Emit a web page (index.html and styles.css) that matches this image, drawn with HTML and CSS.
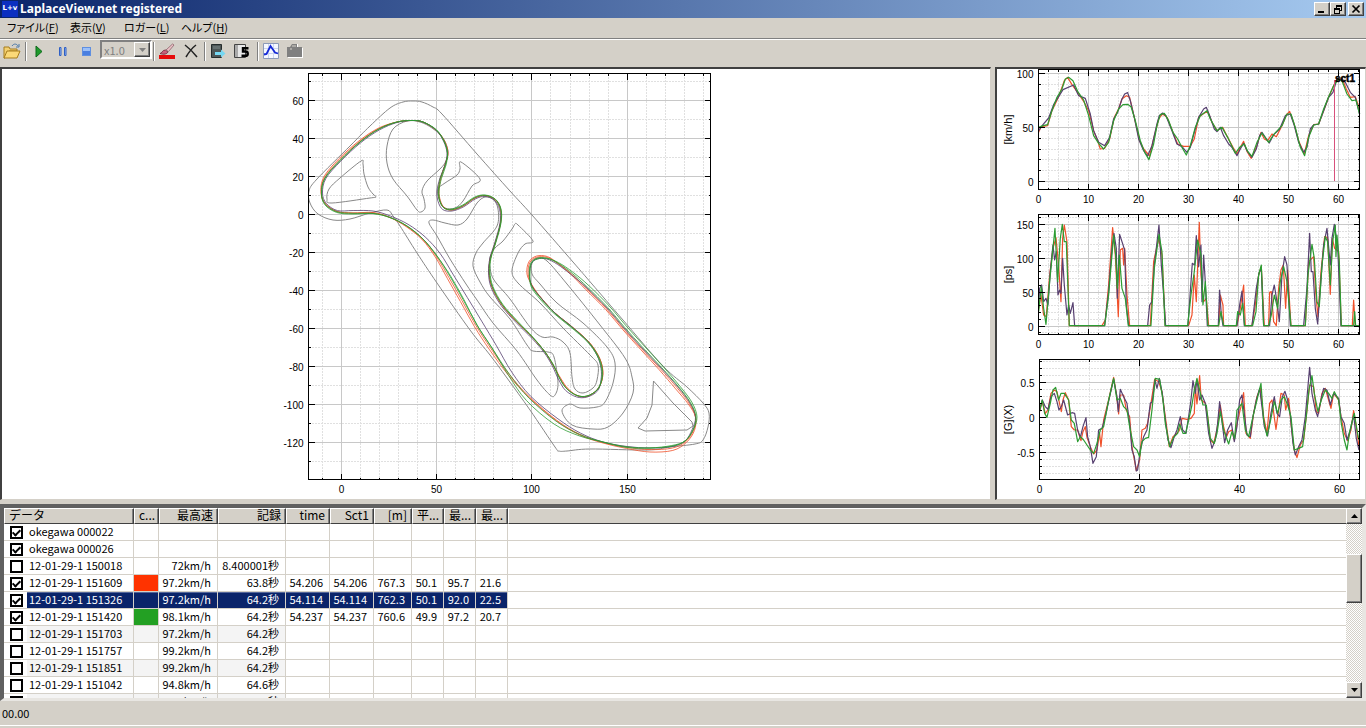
FILE: index.html
```html
<!DOCTYPE html>
<html lang="ja">
<head>
<meta charset="utf-8">
<title>LaplaceView.net registered</title>
<link rel="stylesheet" href="styles.css">
</head>
<body>
<div class="app">
  <header class="titlebar">
    <span class="app-icon">L+v</span>
    <h1 class="title">LaplaceView.net registered</h1>
    <button class="win-btn" aria-label="Minimize"><svg width="12" height="10"><path d="M2 8h6" stroke="#000" stroke-width="2"/></svg></button>
    <button class="win-btn" aria-label="Restore"><svg width="12" height="10" fill="none" stroke="#000" shape-rendering="crispEdges"><path d="M4 1h6M4 2h6M4.500 1v3M9.500 1v5M8 6h2M2 4h6M2 5h6M2.500 4v5M7.500 4v5M2 9h6"/></svg></button>
    <button class="win-btn close" aria-label="Close"><svg width="12" height="10"><path d="M2.500 1.500l7 7M9.500 1.500l-7 7" stroke="#000" stroke-width="1.700"/></svg></button>
  </header>

  <nav class="menubar">
    <button class="menu">ファイル(<u>F</u>)</button>
    <button class="menu">表示(<u>V</u>)</button>
    <button class="menu">ロガー(<u>L</u>)</button>
    <button class="menu">ヘルプ(<u>H</u>)</button>
  </nav>

  <div class="toolbar">
    <button class="tool" aria-label="Open"><svg width="18" height="16"><path d="M1 4h5l1 2h7v2H6l-4 7H1z" fill="#f3d070" stroke="#a77c1c"/><path d="M4 8h13l-3 7H1z" fill="#fbd978" stroke="#a77c1c"/><path d="M9 3c2-3 5-2 6 0M16 1v3h-3" fill="none" stroke="#4b78a8"/></svg></button>
    <span class="sep"></span>
    <button class="tool" aria-label="Play"><svg width="16" height="16"><path d="M5 3l6 5.500L5 14z" fill="#1f9a2c" stroke="#0d6b1b"/></svg></button>
    <button class="tool" aria-label="Pause"><svg width="16" height="16"><path d="M4.500 4.500h1.500v8H4.500zM9.500 4.500H11v8H9.500z" fill="#9cc0f8" stroke="#2f5fc4"/></svg></button>
    <button class="tool" aria-label="Stop"><svg width="16" height="16"><rect x="3.500" y="4.500" width="8" height="8" fill="#4a7fe0" stroke="#5f8fe0"/><path d="M4 5h7v3H4z" fill="#9cc0f8"/></svg></button>
    <span class="combo">
      <select class="speed" aria-label="Speed" disabled><option>x1.0</option></select>
      <span class="combo-arrow"><svg width="9" height="5"><path d="M1 1h7l-3.500 4z" fill="#808080"/></svg></span>
    </span>
    <span class="sep"></span>
    <button class="tool" aria-label="Line colour"><svg width="18" height="16"><path d="M1 12h16v4H1z" fill="#e60b0b"/><path d="M2 10.500c2 0 2-3.500 5.500-3.500L10 9c-1 2-4 3-8 1.500z" fill="#c9617c" stroke="#6c2434" stroke-width=".8"/><path d="M8 7l6.500-6L16 2l-5.500 6.500z" fill="#eac1c6" stroke="#8b6068" stroke-width=".8"/></svg></button>
    <button class="tool" aria-label="Delete"><svg width="16" height="16"><path d="M2 2c4 3 8 7 12 12M13 2C9 5 6 9 3 14" stroke="#222" stroke-width="1.500" fill="none"/></svg></button>
    <span class="sep"></span>
    <button class="tool" aria-label="Logger"><svg width="16" height="16"><path d="M1.500 1.500h10v13h-10z" fill="#4d5656" stroke="#252c2c"/><path d="M3 3h7v3H3z" fill="#657070"/><path d="M5 9h6V6.500l4.500 4L11 14.500V12H5z" fill="#76d8f2"/></svg></button>
    <button class="tool" aria-label="Five hertz"><svg width="18" height="16"><path d="M1.500 1.500h11v13h-11z" fill="#e8e8e8" stroke="#444"/><path d="M2 2h3v12H2z" fill="#aaa"/><path d="M15.500 5.200H10V8.500h2.500c3 0 3 4.300 0 4.300H8.500" fill="none" stroke="#000" stroke-width="2.400"/></svg></button>
    <span class="sep wide"></span>
    <button class="tool" aria-label="Graph"><svg width="16" height="16"><path d="M.500.500h15v15H.500z" fill="#f5f8ff" stroke="#8c9ab8"/><path d="M5.500 1v14M10.500 1v14M1 5.500h14M1 10.500h14" stroke="#cbd5ee"/><path d="M1 11.500l2.500-.5L7.500 3l4.500 6.500 3 1" fill="none" stroke="#1428d8" stroke-width="1.800"/></svg></button>
    <button class="tool" aria-label="Copy" disabled><svg width="18" height="16"><path d="M2 5h3l2-4h5v4h5v10H2z" fill="#fff"/><path d="M1 4h3l2-3h5v3h5v10H1z" fill="#808080"/><path d="M6 3h4M4 6h2" stroke="#d4d0c8"/></svg></button>
  </div>

  <main class="workspace">
    <section class="views">
      <div class="pane"><svg id="map" class="plot" viewBox="2 69 988 430" role="img" aria-label="Course map"></svg></div>
      <div class="pane"><svg id="charts" class="plot" viewBox="997 69 368 430" role="img" aria-label="Speed, power and G graphs"></svg></div>
    </section>

    <section class="list">
      <div class="list-body">
        <table class="laps">
          <colgroup><col class="c-name"><col class="c-color"><col class="c-top"><col class="c-rec"><col class="c-time"><col class="c-time"><col class="c-dist"><col class="c-num"><col class="c-num"><col class="c-num"><col></colgroup>
          <thead><tr><th class="left">データ</th><th class="left">c...</th><th>最高速</th><th>記録</th><th>time</th><th>Sct1</th><th>[m]</th><th>平...</th><th>最...</th><th>最...</th><th></th></tr></thead>
          <tbody>
            <tr><td><label class="name"><input type="checkbox" checked><span>okegawa 000022</span></label></td><td></td><td></td><td></td><td></td><td></td><td></td><td></td><td></td><td></td><td></td></tr>
            <tr><td><label class="name"><input type="checkbox" checked><span>okegawa 000026</span></label></td><td></td><td></td><td></td><td></td><td></td><td></td><td></td><td></td><td></td><td></td></tr>
            <tr><td><label class="name"><input type="checkbox"><span>12-01-29-1 150018</span></label></td><td></td><td>72km/h</td><td>8.400001秒</td><td></td><td></td><td></td><td></td><td></td><td></td><td></td></tr>
            <tr><td><label class="name"><input type="checkbox" checked><span>12-01-29-1 151609</span></label></td><td class="red"></td><td>97.2km/h</td><td>63.8秒</td><td>54.206</td><td>54.206</td><td>767.3</td><td>50.1</td><td>95.7</td><td>21.6</td><td></td></tr>
            <tr class="selected"><td><label class="name"><input type="checkbox" checked><span>12-01-29-1 151326</span></label></td><td></td><td>97.2km/h</td><td>64.2秒</td><td>54.114</td><td>54.114</td><td>762.3</td><td>50.1</td><td>92.0</td><td>22.5</td><td></td></tr>
            <tr><td><label class="name"><input type="checkbox" checked><span>12-01-29-1 151420</span></label></td><td class="green"></td><td>98.1km/h</td><td>64.2秒</td><td>54.237</td><td>54.237</td><td>760.6</td><td>49.9</td><td>97.2</td><td>20.7</td><td></td></tr>
            <tr class="alt"><td><label class="name"><input type="checkbox"><span>12-01-29-1 151703</span></label></td><td></td><td>97.2km/h</td><td>64.2秒</td><td></td><td></td><td></td><td></td><td></td><td></td><td></td></tr>
            <tr><td><label class="name"><input type="checkbox"><span>12-01-29-1 151757</span></label></td><td></td><td>99.2km/h</td><td>64.2秒</td><td></td><td></td><td></td><td></td><td></td><td></td><td></td></tr>
            <tr class="alt"><td><label class="name"><input type="checkbox"><span>12-01-29-1 151851</span></label></td><td></td><td>99.2km/h</td><td>64.2秒</td><td></td><td></td><td></td><td></td><td></td><td></td><td></td></tr>
            <tr><td><label class="name"><input type="checkbox"><span>12-01-29-1 151042</span></label></td><td></td><td>94.8km/h</td><td>64.6秒</td><td></td><td></td><td></td><td></td><td></td><td></td><td></td></tr>
            <tr class="alt"><td><label class="name"><input type="checkbox"><span>12-01-29-1 151128</span></label></td><td></td><td>98.7km/h</td><td>64.6秒</td><td></td><td></td><td></td><td></td><td></td><td></td><td></td></tr>
          </tbody>
        </table>
      </div>
      <div class="scrollbar">
        <button class="scroll-btn" aria-label="Scroll up"><svg width="7" height="4"><path d="M0 4h7L3.500 0z"/></svg></button>
        <div class="track-top"></div>
        <div class="thumb"></div>
        <div class="track-bottom"></div>
        <button class="scroll-btn" aria-label="Scroll down"><svg width="7" height="4"><path d="M0 0h7L3.500 4z"/></svg></button>
      </div>
    </section>
  </main>

  <footer class="status">00.00</footer>
</div>
<script src="plots.js"></script>
</body>
</html>
```
FILE: styles.css
```css
* { box-sizing: border-box; }
body { margin: 0; background: #d4d0c8; color: #000; font-family: "Noto Sans CJK JP", sans-serif; font-size: 11px; }
button { font: inherit; color: inherit; padding: 0; border: 0; background: none; }
.app { height: 100vh; display: flex; flex-direction: column; }

.titlebar { height: 18px; flex: none; display: flex; align-items: center; padding: 0 2px; background: linear-gradient(90deg, #0a246a, #a6caf0); color: #fff; }
.app-icon { width: 16px; height: 16px; background: #0b2fc0; font: bold 7px/15px "DejaVu Sans", sans-serif; text-align: center; white-space: nowrap; }
.title { flex: 1; margin: 0 0 0 2px; font: bold 12px/16px "Noto Sans", sans-serif; }
.win-btn { width: 16px; height: 14px; background: #d4d0c8; border: 1px solid; border-color: #fff #404040 #404040 #fff; box-shadow: inset -1px -1px #808080; display: flex; align-items: center; justify-content: center; }
.win-btn.close { margin-left: 2px; }

.menubar { height: 22px; flex: none; display: grid; grid-template-columns: 63px 54px 57px auto; justify-content: start; padding-left: 7px; border-bottom: 1px solid #fff; box-shadow: inset 0 -1px #808080; }
.menu { text-align: left; line-height: 17px; height: 19px; font-feature-settings: "palt"; white-space: nowrap; }

.toolbar { height: 27px; flex: none; display: flex; align-items: flex-start; }
.tool { width: 24px; height: 22px; display: flex; align-items: center; justify-content: center; }
.sep { width: 3px; height: 19px; margin-top: 2px; border-right: 1px solid #fff; box-shadow: inset -1px 0 #808080; }
.sep.wide { width: 5px; }
.combo { position: relative; width: 52px; height: 19px; margin-left: 1px; }
.speed { appearance: none; display: block; width: 100%; height: 19px; padding: 0 2px; border: 2px solid; border-color: #808080 #fff #fff #808080; background: #d4d0c8; color: #808080; opacity: 1; font: inherit; line-height: 14px; border-radius: 0; }
.combo-arrow { position: absolute; right: 2px; top: 2px; width: 16px; height: 15px; background: #d4d0c8; border: 1px solid; border-color: #fff #404040 #404040 #fff; box-shadow: inset -1px -1px #808080; display: flex; align-items: center; justify-content: center; pointer-events: none; }

.workspace { flex: 1; min-height: 0; display: grid; grid-template-rows: 433fr 197fr; gap: 4px; }
.views { min-height: 0; display: grid; grid-template-columns: 991fr 371fr; gap: 4px; }
.pane { min-width: 0; min-height: 0; background: #fff; border: 2px solid; border-width: 2px 1px 1px 2px; border-color: #404040 #d4d0c8 #d4d0c8 #404040; }
.plot { display: block; width: 100%; height: 100%; font-family: "Liberation Sans", sans-serif; font-size: 10px; }
.frame, .tick { stroke: #000; fill: none; shape-rendering: crispEdges; }
.major { stroke: #c8c8c8; shape-rendering: crispEdges; }
.minor { stroke: #e0e0e0; stroke-dasharray: 2 1; shape-rendering: crispEdges; }
.edge { fill: none; stroke: #888; }
.lap { fill: none; stroke-linejoin: round; }
#map .lap { stroke-width: 0.8px; }
#charts .lap { stroke-width: 1.2px; }
.lap-red { stroke: #f0502a; }
.lap-purple { stroke: #574070; }
.lap-green { stroke: #2c9c32; }
.marker { stroke: #d8507c; }
.x-label { text-anchor: middle; }
.y-label { text-anchor: end; }
.axis-title { text-anchor: middle; font-size: 11px; }
.sector { font-weight: bold; stroke: #000; stroke-width: 0.5px; }

.list { min-height: 0; display: flex; background: #fff; border: 4px solid; border-width: 4px 4px 3px 4px; border-color: #606060 #e8e6e2 #e8e6e2 #606060; }
.list-body { flex: 1; min-width: 0; overflow: hidden; }
.laps { width: 100%; table-layout: fixed; border-spacing: 0; }
.c-name { width: 130px; } .c-color { width: 25px; } .c-top { width: 59px; } .c-rec { width: 68px; }
.c-time { width: 44px; } .c-dist { width: 38px; } .c-num { width: 32px; }
.laps th { height: 16px; line-height: 12px; padding: 0 4px 2px; background: #d4d0c8; text-align: right; font-weight: normal; font-size: 12px; white-space: nowrap; border: 1px solid; border-color: #fff #404040 #404040 #fff; box-shadow: inset -1px 0 #808080; }
.laps th.left { text-align: left; }
.laps th:last-child { border-right: 0; box-shadow: none; }
.laps td { height: 17px; line-height: 14px; padding: 0 6px 2px 0; text-align: right; white-space: nowrap; border: 1px solid #d4d0c8; border-width: 0 1px 1px 0; }
.laps td:first-child { padding: 0; }
.laps td:last-child { border-right: 0; }
.name { display: flex; align-items: center; gap: 4px; padding-left: 6px; height: 16px; }
.name span { flex: 1; text-align: left; padding: 0 0 2px 2px; }
.name input { appearance: none; flex: none; margin: 0; width: 13px; height: 13px; border: 2px solid #000; background: #fff; display: grid; place-items: center; }
.name input:checked::after { content: ""; width: 3px; height: 6px; margin-bottom: 2px; border: solid #000; border-width: 0 2px 2px 0; transform: rotate(45deg); }
.red { background: #ff3300; }
.green { background: #23a023; }
.alt .name span, .alt td:nth-child(n+2):nth-child(-n+4) { background: #f4f4f4; }
.selected .name span, .selected td:nth-child(n+2):nth-child(-n+10) { background: #0a246a; color: #fff; box-shadow: inset 0 1px #54669a; }

.scrollbar { width: 16px; flex: none; display: flex; flex-direction: column; background: repeating-conic-gradient(#fff 0 25%, #d4d0c8 0 50%) 0 0 / 2px 2px; }
.scroll-btn, .thumb { flex: none; background: #d4d0c8; border: 1px solid; border-color: #fff #404040 #404040 #fff; box-shadow: inset -1px -1px #808080; }
.scroll-btn { height: 16px; display: flex; align-items: center; justify-content: center; }
.thumb { height: 49px; }
.track-top { flex: 30; }
.track-bottom { flex: 79; }

.status { height: 27px; flex: none; padding: 1px 2px; line-height: 22px; border-bottom: 2px solid #d4d0c8; box-shadow: inset 0 1px #d4d0c8, inset 0 -1px #fff; }
```
FILE: plots.js
```js
const NS = "http://www.w3.org/2000/svg";

function add(parent, tag, attrs, text) {
  const el = document.createElementNS(NS, tag);
  for (const k in attrs) el.setAttribute(k, attrs[k]);
  if (text !== undefined) el.textContent = text;
  parent.appendChild(el);
  return el;
}

const parse = s => s.trim().split(/\s+/).map(p => p.split(",").map(Number));
const snap = v => Math.floor(v) + 0.5;

function line(svg, cls, x1, y1, x2, y2) {
  add(svg, "path", { class: cls, d: `M${x1} ${y1}L${x2} ${y2}` });
}

function range(from, to, step) {
  const out = [];
  for (let i = 0; from + i * step <= to + 1e-6; i++) out.push(Math.round((from + i * step) * 10) / 10);
  return out;
}

function axes(svg, o) {
  const { l, t, r, b } = o;
  const major = (v, step) => Math.abs(v / step - Math.round(v / step)) < 1e-6;
  for (const pass of ["minor", "major"]) {
    for (const v of range(...o.xs)) if (major(v, o.xMajor) === (pass === "major")) line(svg, pass, snap(o.x(v)), t, snap(o.x(v)), b);
    for (const v of range(...o.ys)) if (major(v, o.yMajor) === (pass === "major")) line(svg, pass, l, snap(o.y(v)), r, snap(o.y(v)));
  }
  return () => {
    for (const v of range(...o.xs)) {
      const m = major(v, o.xMajor), n = m ? 6 : 2, x = snap(o.x(v));
      line(svg, "tick", x, t, x, t + n);
      line(svg, "tick", x, b, x, b - n);
      if (m) add(svg, "text", { class: "x-label", x, y: b + 13 }, v);
    }
    for (const v of range(...o.ys)) {
      const m = major(v, o.yMajor), n = m ? 6 : 2, y = snap(o.y(v));
      line(svg, "tick", l, y, l + n, y);
      line(svg, "tick", r, y, r - n, y);
      if (m) add(svg, "text", { class: "y-label", x: l - 5, y: y + 4 }, v);
    }
    add(svg, "rect", { class: "frame", x: l, y: t, width: r - l, height: b - t });
    if (o.title) add(svg, "text", { class: "axis-title", transform: `translate(1012 ${(t + b) / 2}) rotate(-90)` }, o.title);
  };
}

function smooth(p) {
  const n = p.length, at = i => p[(i + n) % n];
  let d = `M${p[0]}`;
  for (let i = 0; i < n; i++) {
    const a = at(i - 1), b = at(i), c = at(i + 1), e = at(i + 2);
    d += `C${b[0] + (c[0] - a[0]) / 6} ${b[1] + (c[1] - a[1]) / 6} ${c[0] - (e[0] - b[0]) / 6} ${c[1] - (e[1] - b[1]) / 6} ${c[0]} ${c[1]}`;
  }
  return d + "Z";
}

/* Course map */
const map = document.getElementById("map");
const finishMap = axes(map, {
  l: 308.5, t: 73.5, r: 710.5, b: 479.5,
  x: v => 341.3 + v * 1.906, y: v => 214.4 - v * 1.903,
  xs: [-10, 190, 10], ys: [-130, 70, 10], xMajor: 50, yMajor: 20
});

const edges = [
  "413,101 422,102 433,107 442,114 477,154 510,191 532,215 573,262 592,284 623,320 663,366 687,387 703,403 709,413 708,427 703,440 695,444 670,447 647,450 590,449 567,451 559,451 555,447 530,410 507,378 490,355 470,330 437,283 417,253 400,226 393,216 387,210 370,213 350,219 333,220 318,214 310,203 309,191 317,179 350,146 370,126 390,108 403,102",
  "361,161 363,164 364,174 368,187 373,194 376,197 370,198 332,203 327,199 329,189 340,178",
  "407,121 393,129 387,146 387,163 393,179 407,196 417,210 421,212 425,208 424,199 422,191 427,181 440,169 446,161 448,151 443,138 432,128 420,122",
  "461,162 480,179 472,186 463,201 455,208 445,208 439,199 438,189 445,183 457,175 460,169",
  "429,223 433,220 445,223 458,225 467,219 477,203 485,197 493,199 498,209 497,226 483,243 476,253 473,266 480,282 490,297 510,319 527,345 533,351 548,352 554,357 558,383 555,395 550,395 537,380 517,351 493,323 477,300 466,284 450,259 437,236",
  "515,224 518,225 533,241 525,244 518,253 512,271 518,283 540,303 563,328 590,355 598,365 597,380 593,388 583,393 575,389 572,377 570,353 563,342 553,337 542,337 530,327 510,299 494,280 490,267 490,257 495,248 503,241 512,229",
  "537,258 532,263 532,274 540,284 557,303 583,323 607,347 615,363 613,383 605,402 597,407 580,408 570,404 562,411 572,425 593,429 608,427 623,413 633,393 632,377 625,358 600,325 567,284 547,261",
];
for (const e of edges) add(map, "path", { class: "edge", d: smooth(parse(e)) });
add(map, "path", { class: "edge", d: "M653.500 381L652 405L647 418L638 428L645 431L687 430L693 426L692 422L673 403Z" });

/* x, y, then the sideways offset of the red, purple and green laps */
const course = parse(`
412,120.500,0,0,0 423,122,0,0,0 436,130,0,0,-.5 444,141,-.5,.5,0 447.500,153,-.5,.5,0 445,165,0,0,-1 440,178,-1,0,-1.500
438,191,-1,1,-1 439.500,201,-1,1.500,-.5 444,208,-.5,2,0 452,210,0,1,-1 463,206,0,1,-1 475,198,0,1,-1
485,195.500,0,1,-.5 495,199.500,0,1,-.5 500.500,209,0,1,-.5 500.500,223,0,.5,-.5 495.500,242,0,.5,-.5 490.500,258,0,.5,-.5 489,272,0,.5,-1
492,287,0,1,-1 502,305,0,1,-1 517,322,0,1,-1 533,338,0,1,-.5 545,352,0,1,0 553,365,0,1,-.5 560,379,-1,1.500,0 567,389,-1,2,0
577,395.500,0,1.500,0 587,396,.5,1,0 597,390,0,1,0 602,380,0,-1,-.5 602.500,368,0,-1.500,-1 598,355,0,-1,-1 588,341,0,-.5,-1
571,326,0,0,-1 555,313,0,0,-1 542,299,0,0,-1.500 532,286,.5,0,-1 529,274,-2,.5,1 530.500,263,-2,1,1 537,258,-2,1,1
547,258,-1.500,1,.5 558,263.500,0,1,-1 572,274,1,1,-2 587,288,2,0,-3 607,308,2,0,-3 624,328,2,0,-3
642,348,2,0,-3 661,368,2.500,0,-2.500 678,387,3,0,-2 690,403,2,0,-2 695.500,417,0,0,-1.500 693,430,-1.500,1,0
685,441,-2,0,0 672,446.500,-4,0,1 650,448,-4,0,0 627,446.500,-2,0,-1 603,442,-1,0,0 580,434,-1,1,-2
557,420,-1,1.500,-5 530,397,-1,1,-5 510,374,-2,2.500,-2 492,348,-3,5,0 477,325,-3,6,0 463,300,-3,5,1
450,277,-3,4,1 437,256,-2,4,0 423,239,-1,3,0 407,226,-1,2,0 390,217.500,0,1.500,0 373,213.500,1,2.500,0 353,213,0,2.500,-1
337,211.500,0,1,-1 325.500,204,0,1,-1 321.500,193,-.5,1,0 325,178,-1.500,1,0 340,160.500,-2,1,0 360,142,-1.500,1,0 379,129,-1,1,0 397,122,0,.5,0`);

function lap(column, scale) {
  const n = course.length;
  return smooth(course.map((p, i) => {
    const a = course[(i + n - 1) % n], b = course[(i + 1) % n];
    const dx = b[0] - a[0], dy = b[1] - a[1], len = Math.hypot(dx, dy), k = p[column] * scale / len;
    return [p[0] - dy * k, p[1] + dx * k];
  }));
}
for (const [name, column, scale] of [["red", 2, 1], ["red", 2, 0.4], ["purple", 3, 1], ["green", 4, 1], ["green", 4, 0.3]])
  add(map, "path", { class: `lap lap-${name}`, d: lap(column, scale) });
finishMap();

/* Time graphs; samples are stored in thirds of a pixel */
const charts = document.getElementById("charts");
const graphs = [
  { top: 64, t: 69.5, b: 189.5, x: v => 1038.3 + v * 5, y: v => 181.5 - v * 1.08, ys: [0, 100, 10], yMajor: 50, xs: [0, 64, 2], xMajor: 10, title: "[km/h]", l: 1038.5,
    red: "145,205 152,188 172,185 185,140 205,98 222,50 232,40 245,62 262,85 280,112 295,140 310,200 322,230 330,255 343,253 358,225 372,160 385,135 395,105 408,95 418,100 432,160 448,230 460,255 478,276 490,225 505,165 517,150 530,160 548,205 562,240 580,247 600,247 612,225 625,160 638,150 652,142 665,175 680,200 697,190 712,220 728,250 740,270 750,250 760,232 770,262 783,283 798,250 812,205 822,225 832,230 845,210 858,218 875,185 888,153 898,142 910,175 925,230 942,270 955,215 970,182 985,180 1000,140 1015,100 1030,65 1040,45 1055,42 1068,75 1080,100 1095,98 1108,135",
    purple: "145,200 158,182 175,162 190,122 205,98 218,77 250,63 265,95 285,103 300,150 310,200 325,235 343,245 358,220 370,165 382,145 395,105 403,90 412,86 420,110 432,160 445,225 460,260 472,276 485,245 500,180 507,155 517,147 527,155 545,200 560,240 575,248 590,265 600,250 612,205 625,160 640,135 648,130 660,160 672,195 680,203 690,190 700,215 715,240 725,250 740,275 750,255 760,238 770,260 785,280 798,255 808,215 815,205 825,220 837,237 850,212 868,195 885,155 900,150 912,185 925,235 940,265 950,250 960,195 970,183 985,180 1000,140 1015,100 1028,85 1040,45 1055,45 1065,55 1080,85 1095,100 1108,150",
    green: "145,190 158,185 172,182 185,140 200,100 215,75 225,45 235,40 248,50 262,82 280,108 295,155 310,215 325,238 340,255 355,235 370,170 385,135 398,122 412,121 422,128 435,170 450,230 463,265 476,287 490,240 500,185 510,152 522,148 535,170 548,205 562,225 575,250 588,273 600,245 615,190 630,155 650,140 660,165 680,200 695,190 712,220 735,268 748,250 762,240 772,262 785,277 800,235 815,207 835,235 850,212 875,185 890,150 902,150 915,190 930,250 943,275 955,220 970,183 985,180 1000,135 1015,98 1030,65 1045,45 1055,50 1070,90 1085,110 1097,108 1108,150" },
  { top: 205, t: 214.5, b: 334.5, x: v => 1038.3 + v * 5, y: v => 326 - v * 0.677, ys: [-10, 160, 10], yMajor: 50, xs: [0, 64, 2], xMajor: 10, title: "[ps]", l: 1038.5,
    red: "145,310 152,270 160,330 168,335 178,210 188,130 197,98 205,180 212,290 217,100 222,60 230,110 237,362 335,362 345,345 355,240 367,68 375,150 384,335 390,135 397,130 400,180 403,130 410,270 418,362 480,362 490,170 505,100 515,150 525,362 595,362 605,330 612,210 618,290 627,52 632,210 640,290 648,280 655,362 685,362 690,270 698,300 700,362 740,362 750,310 760,240 765,362 785,362 795,300 805,210 813,185 822,362 835,362 838,262 843,260 850,350 858,362 865,250 872,195 879,180 886,310 892,195 902,362 945,362 955,170 970,155 976,260 983,335 992,200 1003,95 1012,98 1020,268 1026,100 1033,130 1045,140 1053,362 1086,362 1090,285 1095,362 1108,362",
    purple: "145,300 148,250 154,240 160,290 167,280 173,300 180,200 188,120 193,165 198,140 203,270 208,255 212,265 217,160 222,240 230,330 235,300 240,325 248,293 253,362 343,362 355,260 365,130 371,85 378,130 381,280 388,88 395,110 403,135 408,300 415,362 472,362 478,300 485,290 492,180 498,130 506,60 513,180 520,270 526,362 593,362 600,260 606,175 613,180 618,92 625,185 632,120 635,290 640,150 645,230 651,362 684,362 688,255 693,330 698,362 740,362 748,300 755,258 762,362 785,362 798,250 806,205 813,190 820,362 838,362 845,270 852,240 860,290 867,350 875,210 883,155 890,180 900,362 940,362 950,250 958,85 963,200 968,200 975,310 982,357 990,250 1000,120 1010,70 1020,180 1025,100 1032,58 1042,120 1052,362 1108,362",
    green: "145,320 153,245 160,310 167,358 178,230 187,140 194,70 202,230 210,100 216,58 222,110 228,110 237,362 343,362 355,270 370,90 376,150 381,250 387,150 395,250 405,280 414,362 482,362 492,190 506,88 515,140 524,362 592,362 602,270 612,200 622,105 632,150 638,300 645,230 653,362 685,362 692,320 700,362 738,362 742,320 750,330 757,295 763,362 787,362 797,320 805,210 813,180 820,362 835,362 843,330 852,270 862,310 870,230 880,185 890,230 902,362 945,362 953,210 965,118 972,160 980,290 987,305 995,180 1005,95 1012,110 1020,240 1027,110 1035,60 1037,155 1040,90 1047,170 1053,362 1090,362 1093,320 1096,362 1108,362" },
  { top: 350, t: 359.5, b: 479.5, x: v => 1039.5 + v * 5, y: v => 417.5 - v * 70, ys: [-0.8, 0.8, 0.1], yMajor: 0.5, xs: [0, 64, 10], xMajor: 20, title: "[G](X)", l: 1039.5,
    red: "148,185 156,155 165,190 173,180 182,130 192,120 200,125 213,185 218,150 225,128 235,150 243,230 252,240 262,240 272,272 278,245 285,230 290,262 300,290 310,312 320,300 328,250 332,290 340,210 355,150 370,82 378,130 385,192 390,135 400,135 408,180 418,200 425,290 438,362 448,330 455,240 465,235 472,220 482,160 493,88 505,95 515,125 525,200 537,290 548,260 560,250 568,240 575,205 590,208 602,205 612,190 615,110 620,162 628,77 633,150 645,160 652,200 660,270 670,280 680,240 690,165 700,230 708,262 715,245 725,240 732,270 740,220 752,170 760,128 767,250 780,265 790,190 800,140 810,115 820,200 830,250 838,160 845,150 857,238 865,180 872,130 882,135 886,180 895,145 903,230 912,300 920,323 930,285 940,270 950,180 958,105 970,110 978,185 985,190 995,130 1005,115 1015,150 1022,175 1030,130 1045,150 1052,200 1062,250 1072,272 1082,240 1090,182 1098,230 1106,290",
    purple: "148,180 156,150 165,170 173,178 182,140 192,130 200,155 206,180 213,170 220,150 232,195 245,188 253,190 262,240 270,262 278,230 287,203 292,260 300,290 308,340 318,320 325,240 335,235 345,200 358,140 370,88 380,140 384,185 390,118 400,140 410,160 418,220 425,300 432,320 438,363 442,360 450,300 460,260 470,240 480,160 486,155 494,90 500,115 507,85 516,130 525,210 533,270 542,293 552,260 560,240 570,200 577,240 587,250 595,200 602,150 608,92 615,130 620,90 628,150 635,135 645,160 655,250 665,295 675,270 682,220 688,155 697,230 703,278 712,240 723,218 732,275 740,230 748,150 755,135 763,200 770,255 780,260 788,200 798,150 808,115 815,170 822,230 832,258 842,190 852,140 860,190 868,200 876,140 884,124 892,150 900,195 908,280 915,315 925,290 935,270 945,200 952,120 958,52 965,130 975,180 982,200 992,150 1000,115 1010,120 1020,165 1030,130 1045,145 1052,200 1062,220 1070,270 1080,240 1090,195 1098,265 1106,300",
    green: "148,180 156,150 163,190 170,202 180,160 188,120 196,112 205,150 212,130 222,130 235,150 243,210 252,220 262,275 270,260 280,270 290,285 300,300 310,310 320,280 330,240 340,230 355,150 370,85 380,150 390,145 400,170 410,180 418,230 430,290 440,300 448,320 455,275 465,265 475,262 485,180 495,85 508,88 518,150 525,220 538,290 550,262 562,250 568,222 578,250 586,250 595,210 605,165 612,120 620,85 628,120 638,165 648,165 660,265 672,280 680,250 690,185 700,240 715,282 725,245 733,265 740,180 755,160 765,240 775,260 788,200 800,150 812,100 820,210 830,258 840,215 852,155 862,190 872,150 882,140 892,165 902,200 912,300 925,295 937,290 948,200 956,120 965,77 972,130 983,185 993,150 1005,120 1015,130 1025,145 1032,125 1045,150 1053,220 1062,270 1070,300 1078,245 1092,190 1100,240 1106,270" }
];

for (const g of graphs) {
  const finish = axes(charts, { r: 1359.5, ...g });
  for (const name of ["red", "purple", "green"]) {
    const pts = parse(g[name]).map(([x, y]) => [990.3 + x / 3, g.top + y / 3]);
    add(charts, "path", { class: `lap lap-${name}`, d: "M" + pts.join("L") });
  }
  finish();
}
line(charts, "marker", 1334.5, 80, 1334.5, 181);
add(charts, "text", { class: "sector", x: 1335, y: 82 }, "sct1");
```
